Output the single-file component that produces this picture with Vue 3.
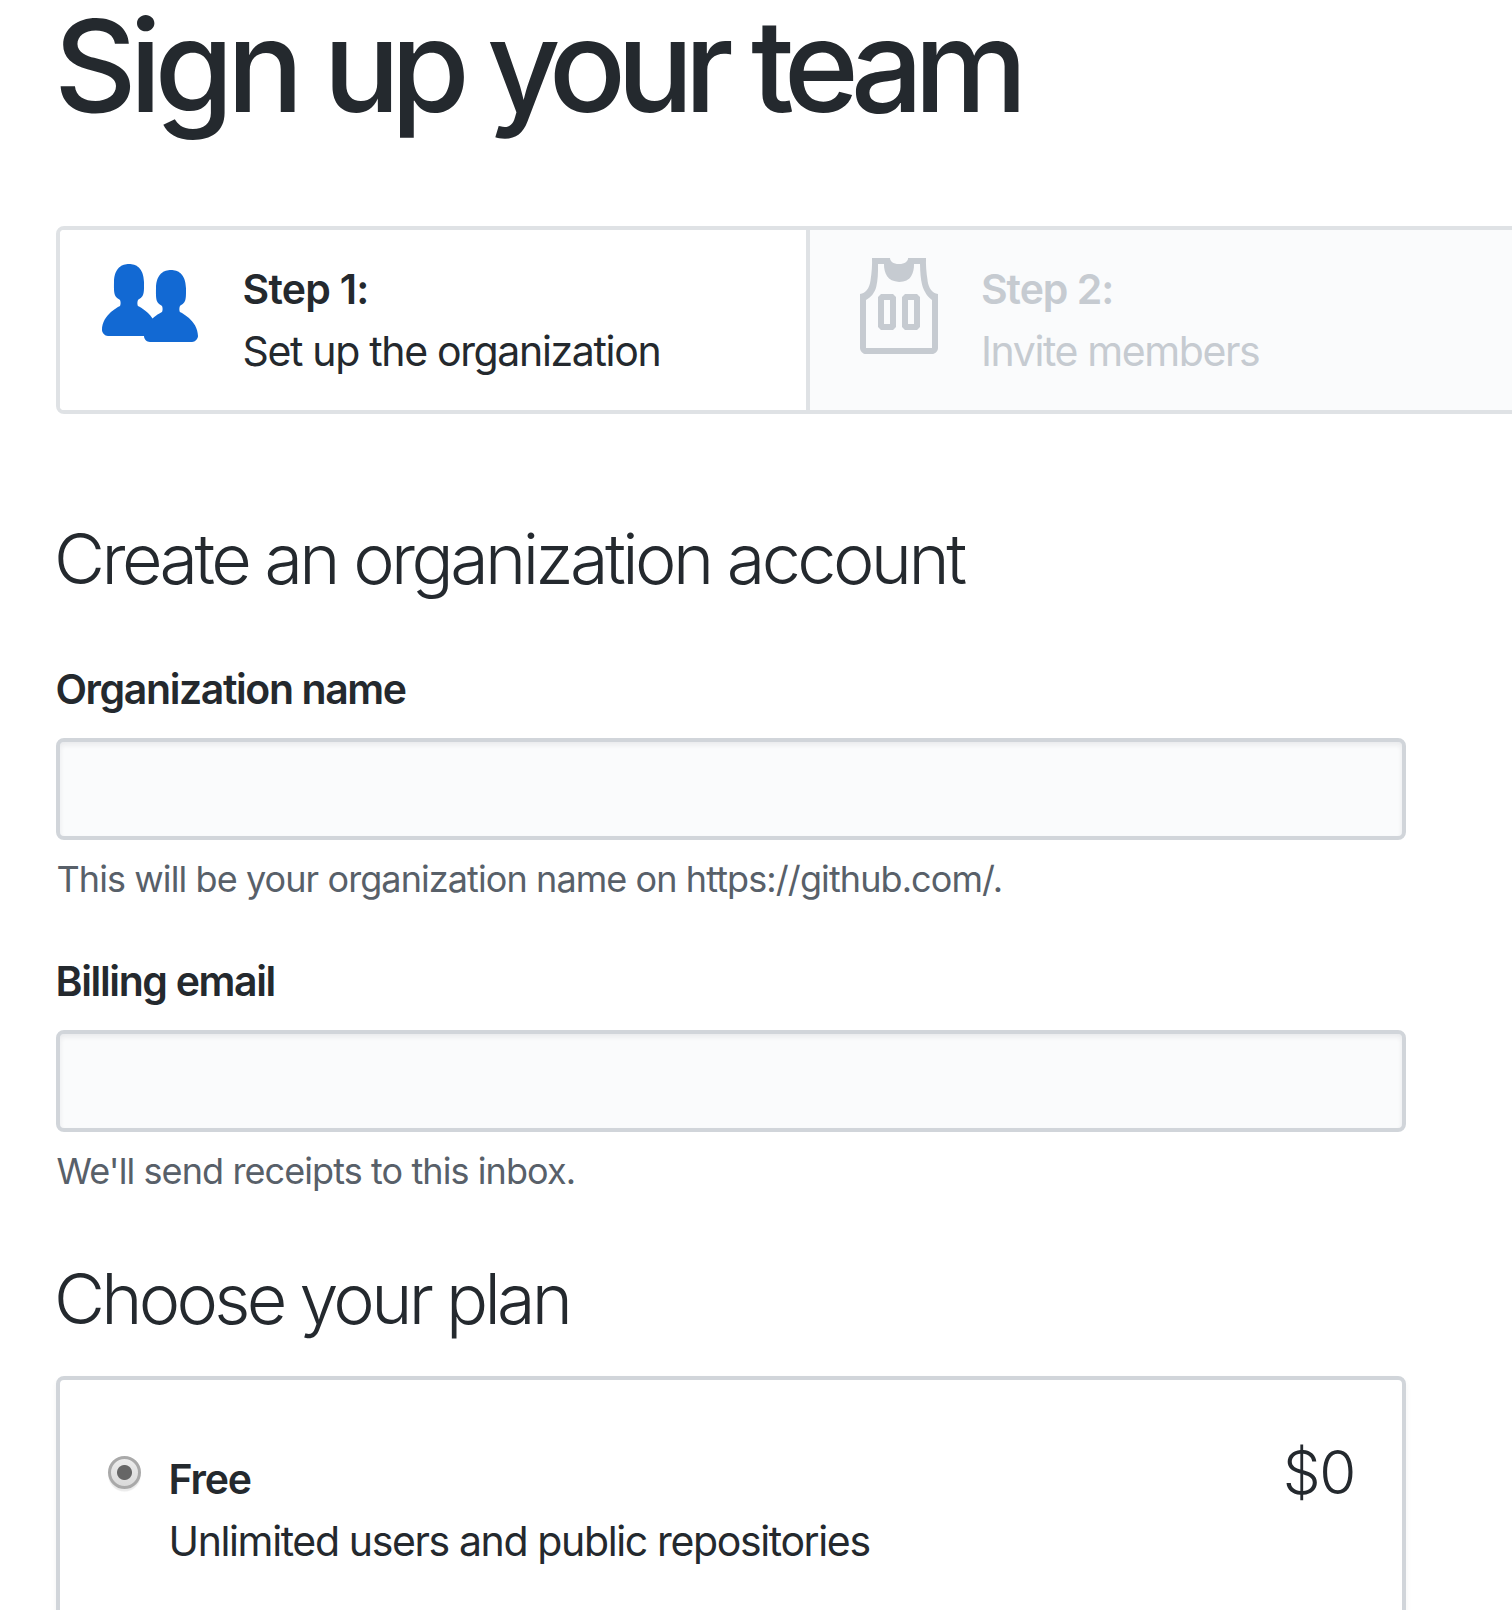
<script setup>
import { ref } from 'vue'

const steps = [
  {
    key: 'organization',
    title: 'Step 1:',
    text: 'Set up the organization',
    current: true,
    icon: 'M16 12.999c0 .439-.45 1-1 1H7.995c-.539 0-.994-.447-.995-.999H1c-.54 0-1-.561-1-1 0-2.634 3-4 3-4s.229-.409 0-1c-.841-.621-1.058-.59-1-3 .058-2.419 1.367-3 2.5-3s2.442.58 2.5 3c.058 2.41-.159 2.379-1 3-.229.59 0 1 0 1s1.549.711 2.42 2.088C9.196 9.369 10 8.999 10 8.999s.229-.409 0-1c-.841-.62-1.058-.59-1-3 .058-2.419 1.367-3 2.5-3s2.437.581 2.495 3c.059 2.41-.158 2.38-1 3-.229.59 0 1 0 1s3.005 1.366 3.005 4'
  },
  {
    key: 'members',
    title: 'Step 2:',
    text: 'Invite members',
    current: false,
    icon: 'M4.5 6l-.5.5v5l.5.5h2l.5-.5v-5L6.5 6h-2zM6 11H5V7h1v4zm6.27-7.25C12.05 2.37 11.96 1.12 12 0H9.02c0 .27-.13.48-.39.69-.25.2-.63.3-1.13.3-.5 0-.88-.09-1.13-.3-.23-.2-.36-.42-.37-.69H3c.05 1.13-.03 2.38-.25 3.75C2.55 5.13 1.95 5.88 1 6v9c.02.27.11.48.31.69.2.21.42.3.69.31h11c.27-.02.48-.11.69-.31.21-.2.3-.42.31-.69V6c-.95-.13-1.53-.88-1.75-2.25h.02zM13 15H2V7c.89-.5 1.48-1.25 1.72-2.25S4.03 2.5 4 1h1c-.02.78.16 1.47.52 2.06.36.58 1.02.89 2 .94.98-.02 1.64-.33 2-.94.36-.59.5-1.28.48-2.06h1c.02 1.42.13 2.55.33 3.38.2.81.69 1.91 1.67 2.62v8zM8.5 6l-.5.5v5l.5.5h2l.5-.5v-5l-.5-.5h-2zm1.5 5H9V7h1v4z'
  }
]

const name = ref('')
const email = ref('')
const plan = ref('free')
</script>

<template>
  <main class="page">
    <h1><span>Sign</span> up your team</h1>

    <ol class="steps">
      <li v-for="s in steps" :key="s.key" class="step" :class="[s.key, { current: s.current }]">
        <svg class="step-icon" viewBox="0 0 16 16" aria-hidden="true"><path :d="s.icon" /></svg>
        <div class="step-body">
          <strong>{{ s.title }}</strong>
          <span>{{ s.text }}</span>
        </div>
      </li>
    </ol>

    <form class="form">
      <h2 class="h-account">Create an organization account</h2>

      <div class="field">
        <label class="l-name" for="org-name">Organization name</label>
        <input id="org-name" v-model="name" type="text" />
        <p>This will be your organization name on https://github.com/.</p>
      </div>

      <div class="field">
        <label class="l-email" for="org-email">Billing email</label>
        <input id="org-email" v-model="email" type="text" />
        <p>We'll send receipts to this inbox.</p>
      </div>

      <h2 class="h-plan">Choose your plan</h2>

      <label class="plan">
        <input v-model="plan" type="radio" name="plan" value="free" />
        <span class="plan-body">
          <strong>Free</strong>
          <span>Unlimited users and public repositories</span>
        </span>
        <span class="price">$0</span>
      </label>
    </form>
  </main>
</template>

<style>
body {
  background: #fff;
}
</style>

<style scoped>
.page {
  box-sizing: border-box;
  height: 1610px;
  padding-left: 56px;
  overflow: hidden;
  background: #fff;
  color: #24292e;
  font-family: Inter, "Liberation Sans", sans-serif;
  font-size: 41px;
  font-weight: 430;
  line-height: 62px;
  white-space: nowrap;
}

h1 {
  margin: 0 0 96px -2px;
  font-size: 128px;
  font-weight: 450;
  line-height: 131px;
  letter-spacing: -9.45px;
  word-spacing: 2px;
}

h1 {
  margin-bottom: 95px;
}

h1 span {
  letter-spacing: -7.2px;
}

.steps {
  display: flex;
  box-sizing: border-box;
  width: 1508px;
  height: 188px;
  margin: 0 0 104px;
  padding: 0;
  list-style: none;
  border: 4px solid #dfe2e5;
  border-radius: 8px;
}

.step {
  display: flex;
  box-sizing: border-box;
  flex: 1 0 0;
  gap: 31px;
  padding: 28px 0 0 44px;
  border-left: 4px solid #dfe2e5;
  background: #fafbfc;
  color: #c6cbd1;
}

.step.current {
  flex: 0 0 746px;
  gap: 44.5px;
  padding-left: 42px;
  border-left: 0;
  border-radius: 4px 0 0 4px;
  background: #fff;
  color: #24292e;
}

.step-icon {
  flex: none;
  width: 96px;
  height: 96px;
  fill: #c6cbd1;
}

.current .step-icon {
  fill: #1269d3;
}

.step-body {
  display: flex;
  flex-direction: column;
  letter-spacing: -1.4px;
}

.step-body strong {
  letter-spacing: -1.05px;
}

.current .step-body {
  letter-spacing: -1.34px;
}

.current .step-body strong {
  letter-spacing: -0.75px;
}

strong {
  font-weight: 630;
}

.form {
  width: 1350px;
}

h2 {
  margin: 0 0 0 -2px;
  font-size: 70px;
  font-weight: 320;
  line-height: 81px;
  letter-spacing: -3.54px;
}

.h-account {
  margin-bottom: 59px;
}

.h-plan {
  margin-top: 62px;
  margin-bottom: 37px;
  letter-spacing: -3.72px;
}

.field + .field {
  margin-top: 46px;
}

.field label {
  display: block;
  margin: 0 0 18px -0.5px;
  font-weight: 630;
}

.l-name {
  letter-spacing: -1.4px;
}

.l-email {
  letter-spacing: -1.36px;
}

.field input {
  display: block;
  box-sizing: border-box;
  width: 100%;
  height: 102px;
  margin: 0;
  padding: 0 20px;
  border: 4px solid #d1d5da;
  border-radius: 8px;
  outline: none;
  background: #fafbfc;
  box-shadow: inset 0 3px 5px rgba(27, 31, 35, 0.075);
  color: inherit;
  font: inherit;
}

.field p {
  margin: 14px 0 0 0.5px;
  color: #586069;
  font-size: 36px;
  line-height: 50px;
  letter-spacing: -0.91px;
}

.plan {
  display: flex;
  box-sizing: border-box;
  align-items: flex-start;
  height: 300px;
  padding: 68px 47px 0 48px;
  border: 4px solid #d1d5da;
  border-radius: 8px;
  box-shadow: 0 4px 6px rgba(27, 31, 35, 0.05);
}

.plan input {
  appearance: none;
  box-sizing: border-box;
  flex: none;
  width: 33px;
  height: 33px;
  margin: 8px 27.5px 0 0;
  border: 3px solid #a9a9a9;
  border-radius: 50%;
  background: linear-gradient(#ececec, #dadada);
  box-shadow: 0 3px 1px -0.5px #ebebeb;
}

.plan input:checked {
  background: radial-gradient(circle, #666 7px, transparent 8px), linear-gradient(#ececec, #dadada);
}

.plan-body {
  display: flex;
  flex: 1;
  flex-direction: column;
  letter-spacing: -1.37px;
}

.plan-body strong {
  letter-spacing: -1.2px;
}

.price {
  margin-top: -7px;
  font-size: 60px;
  font-weight: 330;
  letter-spacing: -1.4px;
}
</style>
